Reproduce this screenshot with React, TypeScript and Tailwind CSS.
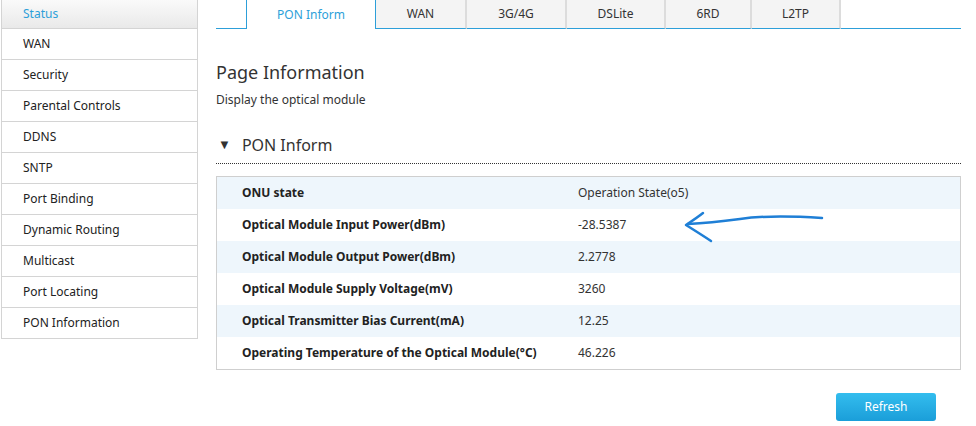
import React from 'react'

const menu = [
    'Status',
    'WAN',
    'Security',
    'Parental Controls',
    'DDNS',
    'SNTP',
    'Port Binding',
    'Dynamic Routing',
    'Multicast',
    'Port Locating',
    'PON Information',
]

const tabs = [
    { name: 'WAN', w: 'w-[91px]' },
    { name: '3G/4G', w: 'w-[100px]' },
    { name: 'DSLite', w: 'w-[99px]' },
    { name: '6RD', w: 'w-[86px]' },
    { name: 'L2TP', w: 'w-[89px]' },
]

const rows = [
    ['ONU state', 'Operation State(o5)'],
    ['Optical Module Input Power(dBm)', '-28.5387'],
    ['Optical Module Output Power(dBm)', '2.2778'],
    ['Optical Module Supply Voltage(mV)', '3260'],
    ['Optical Transmitter Bias Current(mA)', '12.25'],
    ['Operating Temperature of the Optical Module(°C)', '46.226'],
]

export default function App() {
    return (
        <div className="relative flex h-[426px] w-[976px] bg-white font-['Noto_Sans',sans-serif] text-[12px] text-[#333]">
            {/* Side menu */}
            <div className="ml-px w-[197px] self-start border-x border-[#d4d4d4]">
                {menu.map((item, i) => (
                    <div
                        key={item}
                        className={
                            i === 0
                                ? 'flex h-[29px] items-center border-b border-[#d4d4d4] bg-gradient-to-b from-[#fafafa] to-[#e9e9e9] pl-[21px] text-[#2d9fd9]'
                                : 'flex h-[31px] items-center border-b border-[#d4d4d4] bg-white pl-[21px] text-[#222]'
                        }
                    >
                        {item}
                    </div>
                ))}
            </div>

            {/* Main content */}
            <div className="ml-[18px] w-[745px]">
                {/* Tabs */}
                <div className="flex h-[29px]">
                    <div className="w-[30px] border-b border-[#2d9fd9]"></div>
                    <div className="flex w-[130px] items-center justify-center border-x border-[#2d9fd9] bg-white text-[#2d9fd9]">
                        PON Inform
                    </div>
                    {tabs.map((t) => (
                        <div
                            key={t.name}
                            className={`flex ${t.w} items-center justify-center border-r-2 border-b border-r-[#dcdcdc] border-b-[#2d9fd9] bg-[#f4f4f4] text-[#333]`}
                        >
                            {t.name}
                        </div>
                    ))}
                    <div className="flex-1 border-b border-[#2d9fd9]"></div>
                </div>

                <h1 className="mt-[30px] text-[18px] leading-[26px] text-[#333]">Page Information</h1>
                <p className="mt-[6px] leading-[18px] text-[#333]">Display the optical module</p>

                <div className="mt-[24px] flex items-center border-b border-dotted border-[#333] pb-[6px]">
                    <span className="ml-[2px] text-[13px] text-[#333]">▼</span>
                    <span className="ml-[11px] text-[16px] leading-[24px] text-[#333]">PON Inform</span>
                </div>

                <div className="mt-[12px] border border-[#cfcfcf]">
                    {rows.map(([label, value], i) => (
                        <div
                            key={label}
                            className={`flex h-[32px] items-center ${i % 2 === 0 ? 'bg-[#eef6fc]' : 'bg-white'}`}
                        >
                            <div className="w-[361px] pl-[25px] font-bold text-[#222]">{label}</div>
                            <div className="text-[#333]">{value}</div>
                        </div>
                    ))}
                </div>

                <div className="mt-[23px] flex justify-end pr-[25px]">
                    <button className="h-[28px] w-[100px] rounded-[3px] bg-gradient-to-b from-[#33bdee] to-[#1a9ed9] text-[12px] text-white">
                        Refresh
                    </button>
                </div>
            </div>

            {/* Hand-drawn arrow annotation */}
            <svg className="pointer-events-none absolute left-0 top-0" width="976" height="426">
                <path
                    d="M822 218 C 790 216, 760 216, 740 219 C 725 221, 710 223, 688 224"
                    fill="none"
                    stroke="#1f7fd6"
                    strokeWidth="2.5"
                    strokeLinecap="round"
                />
                <path
                    d="M703 213 C 698 217, 692 221, 686 225 C 694 230, 702 235, 711 241"
                    fill="none"
                    stroke="#1f7fd6"
                    strokeWidth="2.5"
                    strokeLinecap="round"
                    strokeLinejoin="round"
                />
            </svg>
        </div>
    )
}
